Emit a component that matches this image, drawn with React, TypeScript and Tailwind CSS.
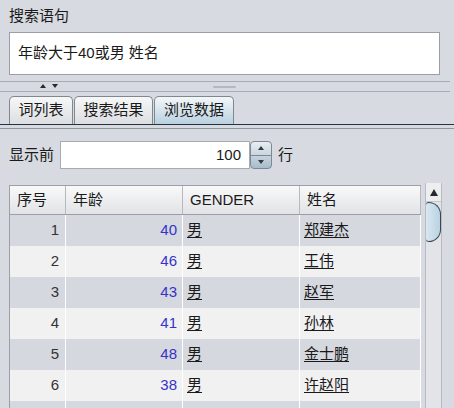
import React from "react";

const ROWS = [
  { id: 1, age: 40, gender: "男", name: "郑建杰" },
  { id: 2, age: 46, gender: "男", name: "王伟" },
  { id: 3, age: 43, gender: "男", name: "赵军" },
  { id: 4, age: 41, gender: "男", name: "孙林" },
  { id: 5, age: 48, gender: "男", name: "金士鹏" },
  { id: 6, age: 38, gender: "男", name: "许赵阳" },
];

const FONT = { fontFamily: '"Liberation Sans", "Noto Sans CJK SC", sans-serif' };

function Tab({ label, active }: { label: string; active?: boolean }) {
  return (
    <div
      className={`flex h-[28px] items-center justify-center rounded-t-[5px] border border-b-0 border-[#7f8790] text-[15px] text-[#1a1a1a] ${
        active
          ? "bg-gradient-to-b from-[#f4f7f9] to-[#b9d0df]"
          : "bg-gradient-to-b from-[#f7f7f7] to-[#dcdee2]"
      }`}
    >
      {label}
    </div>
  );
}

export default function App() {
  return (
    <div className="h-[408px] w-[454px] overflow-hidden bg-[#d7dae0] text-[#1a1a1a]" style={FONT}>
      {/* query label + box */}
      <div className="h-[32px] pl-[9px] pt-[6px] text-[15px] leading-[20px]">搜索语句</div>
      <div className="ml-[9px] flex h-[43px] w-[431px] items-center border border-[#9a9ea6] bg-white pl-[8px] text-[15px]">
        年龄大于40或男 姓名
      </div>

      {/* split pane divider */}
      <div className="relative h-[21px]">
        <div className="absolute left-0 right-[4px] top-[6px] h-px bg-[#a7abb3]" />
        <div className="absolute left-[40px] top-[9px] flex gap-[6px]">
          <div className="h-0 w-0 border-x-[3px] border-b-[4px] border-x-transparent border-b-[#2a2a2a]" />
          <div className="h-0 w-0 border-x-[3px] border-t-[4px] border-x-transparent border-t-[#2a2a2a]" />
        </div>
        <div className="absolute left-[213px] top-[11px] h-[2px] w-[23px] rounded bg-[#b5b9bf]" />
        <div className="absolute left-0 right-[4px] top-[16px] h-px bg-[#a7abb3]" />
      </div>

      {/* tabs */}
      <div className="flex h-[28px] items-end gap-px pl-[9px]">
        <div className="w-[64px]">
          <Tab label="词列表" />
        </div>
        <div className="w-[79px]">
          <Tab label="搜索结果" />
        </div>
        <div className="w-[80px]">
          <Tab label="浏览数据" active />
        </div>
      </div>
      <div className="h-px bg-[#26323e]" />
      <div className="h-[3px]" />
      <div className="h-px bg-[#8f959d]" />

      {/* row count */}
      <div className="mt-[12px] flex h-[28px] items-center pl-[9px] text-[15px]">
        <span className="w-[51px]">显示前</span>
        <div className="flex h-[28px] w-[190px] items-center justify-end border border-[#a6aab1] bg-white pr-[8px] text-[15px]">
          100
        </div>
        <div className="flex h-[28px] w-[22px] flex-col overflow-hidden rounded-[4px] border border-[#7d8894] bg-gradient-to-b from-[#e9eef2] to-[#a9bccb]">
          <div className="flex flex-1 items-center justify-center border-b border-[#7d8894]">
            <div className="h-0 w-0 border-x-[3px] border-b-[4px] border-x-transparent border-b-[#303a44]" />
          </div>
          <div className="flex flex-1 items-center justify-center">
            <div className="h-0 w-0 border-x-[3px] border-t-[4px] border-x-transparent border-t-[#303a44]" />
          </div>
        </div>
        <span className="ml-[6px]">行</span>
      </div>

      {/* table + scrollbar */}
      <div className="mt-[16px] flex pl-[9px]">
        <div className="w-[412px] border-l border-t border-[#9aa0a8]">
          <div className="flex h-[29px] border-b border-[#9aa0a8] bg-gradient-to-b from-[#f9f9f9] to-[#e2e3e6] text-[15px]">
            <div className="flex w-[56px] items-center border-r border-[#b6b9be] pl-[7px]">序号</div>
            <div className="flex w-[117px] items-center border-r border-[#b6b9be] pl-[7px]">年龄</div>
            <div className="flex w-[117px] items-center border-r border-[#b6b9be] pl-[7px]">GENDER</div>
            <div className="flex flex-1 items-center border-r border-[#b6b9be] pl-[7px]">姓名</div>
          </div>
          {ROWS.map((r, i) => (
            <div
              key={r.id}
              className={`flex h-[31px] text-[15px] ${i % 2 === 0 ? "bg-[#d5d8de]" : "bg-[#f1f1f2]"}`}
            >
              <div className="flex w-[56px] items-center justify-end border-r border-white pr-[6px] text-[#333]">
                {r.id}
              </div>
              <div className="flex w-[117px] items-center justify-end border-r border-white pr-[5px] text-[#3434c8]">
                {r.age}
              </div>
              <div className="flex w-[117px] items-center border-r border-white pl-[4px]">
                <span className="underline underline-offset-2">{r.gender}</span>
              </div>
              <div className="flex flex-1 items-center border-r border-white pl-[4px]">
                <span className="underline underline-offset-2">{r.name}</span>
              </div>
            </div>
          ))}
          {/* next row, scrolled out of view */}
          <div className="flex h-[31px] bg-[#d5d8de]">
            <div className="w-[56px] border-r border-white" />
            <div className="w-[117px] border-r border-white" />
            <div className="w-[117px] border-r border-white" />
            <div className="flex-1 border-r border-white" />
          </div>
        </div>
        <div className="ml-[4px] mt-[-2px] flex w-[17px] flex-col border-x border-[#b8bcc2] bg-[#e2e4e8]">
          <div className="flex h-[19px] items-center justify-center border-b border-[#c5c8cd] bg-[#eceef0]">
            <div className="h-0 w-0 border-x-[4px] border-b-[7px] border-x-transparent border-b-[#2a2a2a]" />
          </div>
          <div className="h-[40px] rounded-r-[14px] rounded-l-[3px] border border-l-0 border-[#3b4652] bg-gradient-to-r from-[#d9e7f0] to-[#b9d2e2]" />
        </div>
      </div>
    </div>
  );
}
